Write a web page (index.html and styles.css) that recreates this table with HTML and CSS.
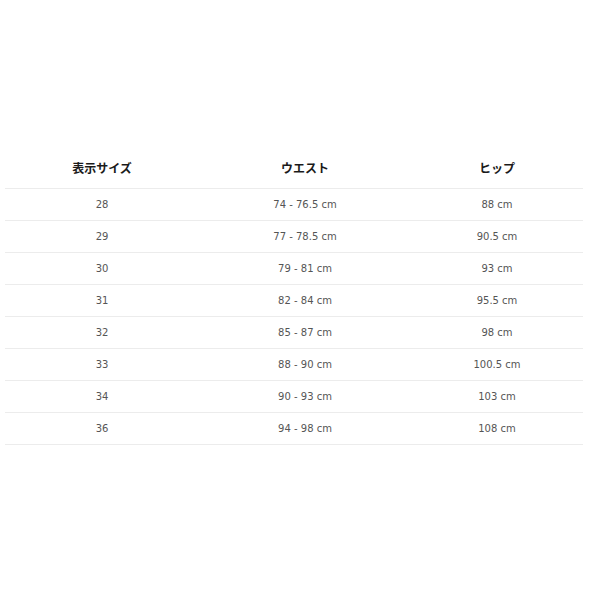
FILE: index.html
```
<!DOCTYPE html>
<html lang="ja">
<head>
<meta charset="utf-8">
<link rel="stylesheet" href="styles.css">
</head>
<body>
<div class="wrap">
<table class="size-table">
<thead>
<tr><th class="c1">表示サイズ</th><th class="c2">ウエスト</th><th class="c3">ヒップ</th></tr>
</thead>
<tbody>
<tr><td>28</td><td>74 - 76.5 cm</td><td>88 cm</td></tr>
<tr><td>29</td><td>77 - 78.5 cm</td><td>90.5 cm</td></tr>
<tr><td>30</td><td>79 - 81 cm</td><td>93 cm</td></tr>
<tr><td>31</td><td>82 - 84 cm</td><td>95.5 cm</td></tr>
<tr><td>32</td><td>85 - 87 cm</td><td>98 cm</td></tr>
<tr><td>33</td><td>88 - 90 cm</td><td>100.5 cm</td></tr>
<tr><td>34</td><td>90 - 93 cm</td><td>103 cm</td></tr>
<tr><td>36</td><td>94 - 98 cm</td><td>108 cm</td></tr>
</tbody>
</table>
</div>
</body>
</html>
```
FILE: styles.css
```
html, body {
  margin: 0;
  padding: 0;
  background: #fff;
}
.wrap {
  padding: 148px 17px 0 5px;
}
.size-table {
  width: 578px;
  border-collapse: separate;
  border-spacing: 0;
  table-layout: fixed;
  font-family: "DejaVu Sans", Verdana, "Noto Sans CJK JP", sans-serif;
}
.size-table th {
  font-family: "Noto Sans CJK JP", sans-serif;
  font-weight: 700;
  font-size: 12px;
  color: #1a1a1a;
  line-height: 20px;
  padding: 10px 0;
  border-bottom: 1px solid #ececec;
  text-align: center;
}
.size-table .c1 { width: 194px; }
.size-table .c2 { width: 212px; }
.size-table .c3 { width: 172px; }
.size-table td {
  font-size: 10px;
  color: #555;
  line-height: 19px;
  padding: 6px 0;
  border-bottom: 1px solid #ececec;
  text-align: center;
}
```
